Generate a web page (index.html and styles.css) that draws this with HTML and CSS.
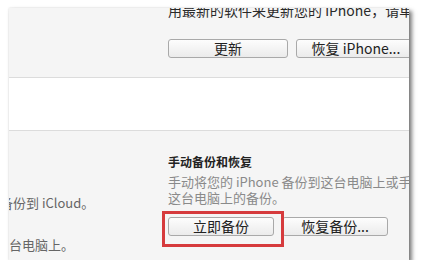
FILE: index.html
```html
<!DOCTYPE html>
<html lang="zh-CN">
<head>
    <meta charset="UTF-8">
    <meta name="viewport" content="width=device-width, initial-scale=1.0">
    <title>iPhone 摘要</title>
    <link rel="stylesheet" href="styles.css">
</head>
<body>
    <div class="window">
        <section class="update">
            <p class="update-note">用最新的软件来更新您的 iPhone，请单击“更新”。</p>
            <div class="btn-row">
                <button class="btn btn-wide">更新</button>
                <button class="btn btn-wide">恢复 iPhone...</button>
            </div>
        </section>

        <section class="blank"></section>

        <section class="backup">
            <div class="backup-auto">
                <p class="auto-line icloud">数据备份到 iCloud。</p>
                <p class="auto-line local">存储在这台电脑上。</p>
            </div>
            <div class="backup-manual">
                <h3>手动备份和恢复</h3>
                <p class="manual-note">手动将您的 iPhone 备份到这台电脑上或手动恢复存储在<br>这台电脑上的备份。</p>
                <div class="btn-row">
                    <span class="mark"><button class="btn">立即备份</button></span>
                    <button class="btn">恢复备份...</button>
                </div>
            </div>
        </section>
    </div>
</body>
</html>
```

FILE: styles.css
```css
body {
    margin: 0;
    background-color: #ffffff;
    font-family: "Noto Sans CJK SC", sans-serif;
    color: #333;
}

.window {
    margin: 8px 0 0 9px;
    width: 400px;
    height: 252px;
    background-color: #f5f5f5;
    overflow: hidden;
    box-shadow: 0 0 2px rgba(0, 0, 0, 0.15), 3px 3px 4px rgba(0, 0, 0, 0.5);
}

.update {
    height: 75px;
    border-bottom: 1px solid #dcdcdc;
    padding-left: 159px;
}

.update-note {
    margin: -6px 0 0;
    font-size: 14px;
    line-height: 16px;
    white-space: nowrap;
    color: #2a2a2a;
}

.update .btn-row {
    margin-top: 21px;
}

.blank {
    height: 52px;
    background-color: #ffffff;
    border-bottom: 1px solid #dcdcdc;
}

.backup {
    display: grid;
    grid-template-columns: 159px 1fr;
}

.backup-auto {
    padding-top: 64px;
}

.auto-line {
    margin: 0;
    font-size: 13px;
    line-height: 16px;
    white-space: nowrap;
    color: #666;
}

.auto-line.icloud {
    text-indent: -35px;
}

.auto-line.local {
    margin-top: 26px;
    text-indent: -52px;
}

.backup-manual {
    padding-top: 23px;
}

h3 {
    margin: 0;
    font-size: 12px;
    line-height: 16px;
    font-weight: bold;
    color: #222;
}

.manual-note {
    margin: 4px 0 0;
    font-size: 13px;
    line-height: 16px;
    white-space: nowrap;
    color: #8a8a8a;
}

.backup .btn-row {
    margin-top: 11px;
}

.btn-row {
    display: flex;
    gap: 8px;
    white-space: nowrap;
}

.btn {
    flex: none;
    width: 106px;
    height: 19px;
    padding: 0;
    border: 1px solid #a9a9a9;
    border-radius: 3px;
    background: linear-gradient(#fdfdfd, #ebebeb);
    font-family: inherit;
    font-size: 14px;
    line-height: 17px;
    color: #222;
}

.btn-wide {
    width: 120px;
}

.mark {
    position: relative;
    display: flex;
}

.mark::after {
    content: "";
    position: absolute;
    top: -6px;
    left: -6px;
    right: -10px;
    bottom: -11px;
    border: 3px solid #d63b3d;
}
```
